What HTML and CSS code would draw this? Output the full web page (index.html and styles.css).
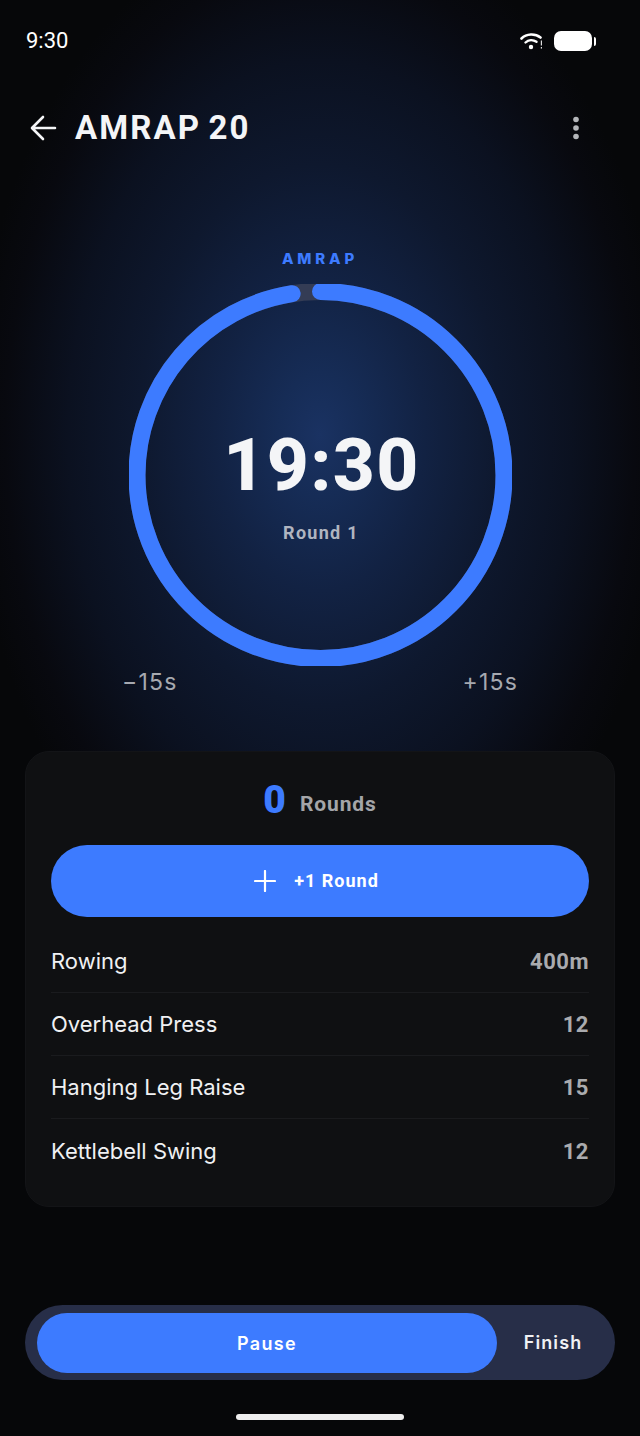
FILE: index.html
```html
<!DOCTYPE html>
<html lang="en">
<head>
<meta charset="utf-8">
<title>AMRAP 20</title>
<link rel="stylesheet" href="styles.css">
</head>
<body>
<div class="app">
  <div class="status">
    <span class="clock">9:30</span>
    <div class="status-icons">
      <svg class="wifi" width="24" height="20" viewBox="0 0 24 20"><path d="M1.5 7.5C6.5 2.6 15 2.2 20.5 6.5" fill="none" stroke="#fff" stroke-width="2.6" stroke-linecap="round"/><path d="M5.5 11.5C8.5 8.6 13 8.4 16.5 10.8" fill="none" stroke="#fff" stroke-width="2.4" stroke-linecap="round"/><circle cx="11" cy="16" r="2.2" fill="#fff"/><rect x="20.8" y="9.5" width="1.2" height="5" fill="#ddd"/><rect x="20.8" y="16" width="1.2" height="1.6" fill="#ddd"/></svg>
      <div class="battery"><div class="battery-body"></div><div class="battery-tip"></div></div>
    </div>
  </div>
  <header class="topbar">
    <svg class="back" width="28" height="28" viewBox="0 0 28 28"><path d="M26 14H3.5M14 3 3 14l11 11" fill="none" stroke="#f4f5f7" stroke-width="2.6" stroke-linecap="round" stroke-linejoin="round"/></svg>
    <h1 class="title">AMRAP 20</h1>
    <svg class="more" width="8" height="24" viewBox="0 0 8 24"><circle cx="4" cy="3.5" r="2.8" fill="#b4b6ba"/><circle cx="4" cy="12" r="2.8" fill="#b4b6ba"/><circle cx="4" cy="20.5" r="2.8" fill="#b4b6ba"/></svg>
  </header>
  <section class="timer">
    <div class="mode">AMRAP</div>
    <div class="ring">
      <svg width="383" height="382" viewBox="0 0 383 382">
        <circle cx="191.5" cy="191" r="183.5" fill="none" stroke="#343c55" stroke-width="17"/>
        <circle class="arc" cx="191.5" cy="191" r="183.5" fill="none" stroke="#3d7bff" stroke-width="17" stroke-linecap="round" stroke-dasharray="1124 1153" transform="rotate(-90 191.5 191)"/>
      </svg>
      <div class="ring-text">
        <div class="time">19:30</div>
        <div class="round">Round 1</div>
      </div>
    </div>
    <div class="adjust"><span>−15s</span><span>+15s</span></div>
  </section>
  <section class="card">
    <div class="count"><span class="count-num">0</span><span class="count-label">Rounds</span></div>
    <button class="add">
      <svg width="22" height="22" viewBox="0 0 22 22"><path d="M11 1v20M1 11h20" stroke="#fff" stroke-width="2.2" stroke-linecap="round"/></svg>
      <span>+1 Round</span>
    </button>
    <ul class="list">
      <li class="row"><span>Rowing</span><b>400m</b></li>
      <li class="row"><span>Overhead Press</span><b>12</b></li>
      <li class="row"><span>Hanging Leg Raise</span><b>15</b></li>
      <li class="row"><span>Kettlebell Swing</span><b>12</b></li>
    </ul>
  </section>
  <div class="controls">
    <button class="pause">Pause</button>
    <button class="finish">Finish</button>
  </div>
  <div class="home"></div>
</div>
</body>
</html>
```
FILE: styles.css
```css
* { box-sizing: border-box; margin: 0; padding: 0; }
html, body { width: 640px; height: 1436px; background: #050507; overflow: hidden; }
body { font-family: Inter, "Liberation Sans", sans-serif; color: #f4f5f7; }
.app {
  width: 640px; height: 1436px; display: flex; flex-direction: column;
  background: radial-gradient(ellipse 350px 520px at 320px 435px, #1a3262 0%, #162c56 12%, #122243 30%, #0e182e 52%, #0b1120 72%, #08090f 90%, #060709 100%);
}
.status { height: 82px; padding: 28px 44px 0 26px; display: flex; justify-content: space-between; align-items: flex-start; }
.clock { font-family: Roboto, sans-serif; font-size: 22px; line-height: 26px; color: #fff; }
.status-icons { display: flex; align-items: center; gap: 9px; height: 26px; }
.wifi { display: block; margin-right: 1px; }
.battery { display: flex; align-items: center; gap: 2px; }
.battery-body { width: 38px; height: 20px; border-radius: 7px; background: #fff; }
.battery-tip { width: 2px; height: 9px; border-radius: 0 2px 2px 0; background: #fff; }
.topbar { height: 92px; padding: 0 60px 0 29px; display: flex; align-items: center; }
.back { display: block; margin-right: 18px; }
.title { flex: 1; font-family: Roboto, sans-serif; font-size: 33px; font-weight: 700; letter-spacing: 2.1px; word-spacing: -3px; line-height: 92px; color: #f4f5f7; }
.more { display: block; }
.timer { height: 577px; padding-top: 75px; display: flex; flex-direction: column; align-items: center; }
.mode { font-family: Inter, sans-serif; font-size: 15px; font-weight: 800; letter-spacing: 3.8px; line-height: 20px; color: #3d7bff; margin-bottom: 15px; }
.ring { position: relative; width: 383px; height: 382px; margin-left: 1px; overflow: hidden; }
.ring svg { display: block; }
.ring-text { position: absolute; inset: 0; display: flex; flex-direction: column; align-items: center; padding-top: 138px; }
.time { font-family: Roboto, sans-serif; font-size: 73px; font-weight: 800; line-height: 86px; letter-spacing: 1.4px; color: #f4f5f7; padding-left: 2px; }
.round { margin-top: 14px; font-family: Roboto, sans-serif; font-size: 18px; font-weight: 700; letter-spacing: 1.3px; line-height: 22px; color: #b0b5c0; padding-left: 1px; }
.adjust { width: 396px; margin-top: 2px; display: flex; justify-content: space-between; font-size: 23px; letter-spacing: 1.2px; line-height: 28px; color: #a6a9b0; }
.card {
  width: 590px; height: 456px; margin: 0 25px; padding: 26px 26px 0;
  background: #0f1012; border: 1px solid #131417; border-radius: 24px;
}
.count { height: 44px; display: flex; justify-content: center; align-items: center; gap: 14px; }
.count-num { font-family: Roboto, sans-serif; font-size: 39px; font-weight: 900; line-height: 44px; color: #3d7bff; }
.count-label { font-family: Roboto, sans-serif; font-size: 21px; font-weight: 700; letter-spacing: .9px; line-height: 28px; color: #a4a5a8; margin-top: 7px; }
.add {
  width: 538px; height: 72px; margin: 23px -1px 0; display: flex; align-items: center; justify-content: center; gap: 18px; padding-right: 7px;
  border: 0; border-radius: 36px; background: #3d7bff; color: #fff;
  font-family: Roboto, sans-serif; font-size: 18px; font-weight: 700; letter-spacing: 1px;
}
.add span { margin-top: -2px; }
.list { list-style: none; margin: 0 -1px; padding-top: 13px; }
.row { height: 63px; display: flex; justify-content: space-between; align-items: center; font-size: 22px; color: #f0f1f3; border-bottom: 1px solid #1a1b1e; }
.row:last-child { border-bottom: 0; }
.row b { font-family: Roboto, sans-serif; font-weight: 700; font-size: 22px; letter-spacing: .5px; color: #aaabae; padding-top: 1px; }
.controls {
  position: absolute; left: 25px; top: 1305px; width: 590px; height: 75px; padding: 8px 12px;
  display: flex; align-items: center; background: #272e48; border-radius: 38px;
}
.pause { width: 460px; height: 60px; border: 0; border-radius: 30px; padding-top: 1px; background: #3d7bff; color: #fff; font-family: Inter, sans-serif; font-size: 18px; font-weight: 600; letter-spacing: 1.3px; }
.finish { flex: 1; border: 0; background: none; color: #f0f1f4; font-family: Inter, sans-serif; font-size: 18px; font-weight: 600; letter-spacing: 1.1px; text-align: center; padding-left: 6px; }
.home { position: absolute; left: 236px; top: 1414px; width: 168px; height: 6px; border-radius: 3px; background: #eee; }
```
